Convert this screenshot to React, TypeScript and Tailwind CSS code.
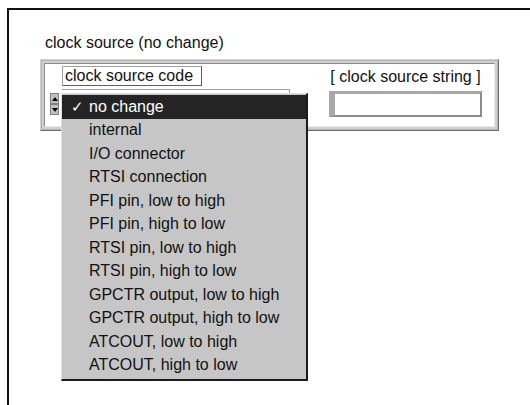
import React from "react";

const items = [
  "no change",
  "internal",
  "I/O connector",
  "RTSI connection",
  "PFI pin, low to high",
  "PFI pin, high to low",
  "RTSI pin, low to high",
  "RTSI pin, high to low",
  "GPCTR output, low to high",
  "GPCTR output, high to low",
  "ATCOUT, low to high",
  "ATCOUT, high to low",
];

export default function App() {
  return (
    <div
      className="w-[530px] h-[405px] bg-white overflow-hidden pt-[8px] pl-[7px] text-[#111]"
      style={{ fontFamily: '"Liberation Sans", Arial, sans-serif' }}
    >
      <div className="h-full border-t-2 border-l-2 border-[#111] pt-[24px] pl-[31px]">
        <div className="ml-[5px] text-[16px] leading-[18px]">clock source (no change)</div>
        <div className="relative mt-[7px] w-[459px] h-[72px] border border-t-[#d0d0d0] border-l-[#d0d0d0] border-r-[#707070] border-b-[#707070] bg-[#b4b4b4] p-[1px]">
          <div className="h-full border-[2px] border-[#cfcfcf] ">
            <div className="h-full border border-t-[#8a8a8a] border-l-[#8a8a8a] border-r-[#ececec] border-b-[#ececec] bg-white flex justify-between pl-[5px] pr-[12px] pt-[2px]">
              <div className="flex flex-col">
                <div className="ml-[12px] w-[140px] h-[20px] border border-t-[#a0a0a0] border-l-[#a0a0a0] border-r-[#606060] border-b-[#606060] px-[2px] text-[16px] leading-[18px] whitespace-nowrap">
                  clock source code
                </div>
                <div className="flex mt-[3px] items-start">
                  <div className="flex flex-col mt-[4px] w-[9px]">
                    <div className="h-[11px] bg-[#c0c0c0] border border-[#808080] flex items-center justify-center">
                      <div className="w-0 h-0 border-l-[3px] border-r-[3px] border-b-[4px] border-l-transparent border-r-transparent border-b-black" />
                    </div>
                    <div className="h-[11px] bg-[#c0c0c0] border border-[#808080] flex items-center justify-center">
                      <div className="w-0 h-0 border-l-[3px] border-r-[3px] border-t-[4px] border-l-transparent border-r-transparent border-t-black" />
                    </div>
                  </div>
                  <div className="ml-[3px] w-[228px] h-[28px] border-t border-r border-[#a0a0a0] bg-white" />
                </div>
              </div>
              <div className="flex flex-col items-center">
                <div className="text-[16px] leading-[18px] mt-[2px] whitespace-nowrap">[ clock source string ]</div>
                <div className="mt-[5px] w-[153px] h-[26px] border-l-[6px] border-t-[3px] border-r-[2px] border-b-[2px] border-t-[#a8a8a8] border-l-[#a8a8a8] border-r-[#8c8c8c] border-b-[#8c8c8c] bg-white" />
              </div>
            </div>
          </div>

          <div className="absolute left-[20px] top-[33px] w-[247px] border-l border-t border-l-[#e0e0e0] border-t-[#e0e0e0] border-r-2 border-b-2 border-r-[#1a1a1a] border-b-[#1a1a1a] bg-[#c6c6c6] pt-[1px] pb-[2px]">
            {items.map((t, i) => (
              <div
                key={t}
                className={
                  i === 0
                    ? "h-[23.5px] flex items-center bg-[#242424] text-white text-[16px] whitespace-nowrap"
                    : "h-[23.5px] flex items-center text-[16px] whitespace-nowrap"
                }
              >
                <span className="w-[27px] pl-[9px] text-[15px]">{i === 0 ? "✓" : ""}</span>
                <span>{t}</span>
              </div>
            ))}
          </div>
        </div>
      </div>
    </div>
  );
}
